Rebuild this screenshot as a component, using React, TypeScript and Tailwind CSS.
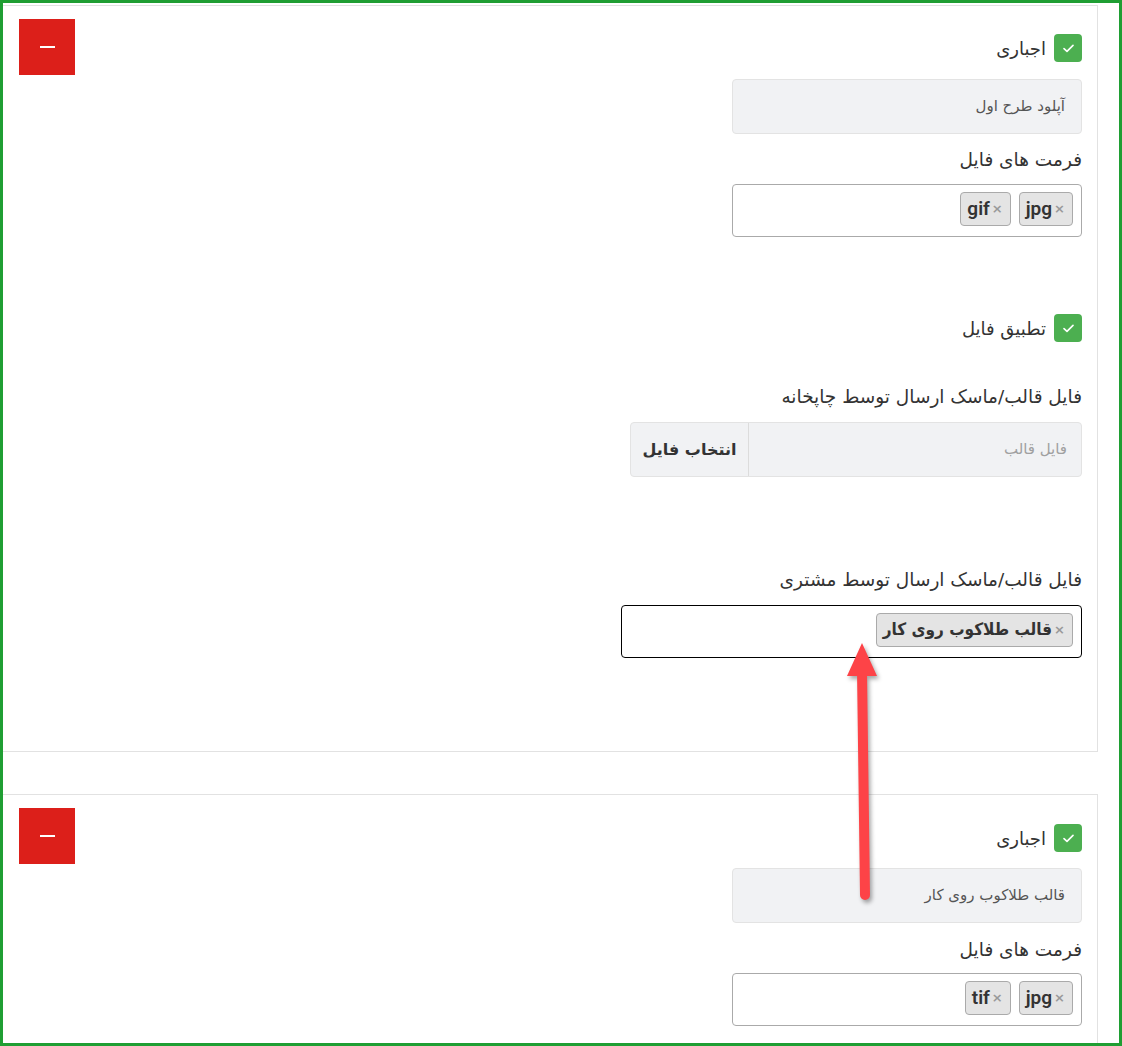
const fa = { fontFamily: '"DejaVu Sans", "Noto Sans", sans-serif' };
const tagFont = { fontFamily: '"DejaVu Sans Condensed", "DejaVu Sans", sans-serif' };
const latinFont = { fontFamily: 'Roboto, "DejaVu Sans", sans-serif' };

function RemoveButton() {
  return (
    <button className="w-14 h-14 bg-[#dc1f1a] flex items-center justify-center shrink-0">
      <span className="block w-[15px] h-[2px] bg-white" />
    </button>
  );
}

function CheckRow({ label }: { label: string }) {
  return (
    <div dir="rtl" className="flex items-center gap-2 h-7">
      <span className="w-7 h-7 rounded-[4px] bg-[#4caf50] flex items-center justify-center">
        <svg width="11" height="9" viewBox="0 0 11 9" fill="none">
          <path d="M1 4.6 L4 7.4 L10 1.4" stroke="white" strokeWidth="1.6" strokeLinecap="round" strokeLinejoin="round" />
        </svg>
      </span>
      <span className="text-[18px] text-[#333]">{label}</span>
    </div>
  );
}

function Label({ text, className = "" }: { text: string; className?: string }) {
  return (
    <div dir="rtl" className={`text-[18.5px] leading-6 text-[#333] ${className}`}>
      {text}
    </div>
  );
}

function Tag({ text, latin }: { text: string; latin?: boolean }) {
  return (
    <span className="h-[34px] flex items-center gap-[2px] pl-[6px] pr-[7px] bg-[#e4e4e4] border border-[#aaa] rounded-[4px]">
      <span className="text-[#999] text-[13px] font-bold">×</span>
      {latin ? (
        <span style={latinFont} className="text-[19px] font-semibold text-[#333]">{text}</span>
      ) : (
        <span style={tagFont} className="text-[17px] font-bold text-[#333]">{text}</span>
      )}
    </span>
  );
}

function TagBox({ tags, width, border, latin }: { tags: string[]; width: string; border: string; latin?: boolean }) {
  return (
    <div dir="rtl" className={`${width} h-[53px] rounded-[4px] border ${border} flex items-start pt-[7px] pr-2 gap-2 bg-white`}>
      {tags.map((t) => (
        <Tag key={t} text={t} latin={latin} />
      ))}
    </div>
  );
}

function DisabledInput({ text }: { text: string }) {
  return (
    <div dir="rtl" className="w-[350px] h-[55px] rounded-[4px] border border-[#e3e3e3] bg-[#f1f2f4] flex items-center pr-4 text-[15px] text-[#555]">
      {text}
    </div>
  );
}

function FileGroup() {
  return (
    <div dir="rtl" className="w-[452px] h-[55px] rounded-[4px] border border-[#e3e3e3] bg-[#f1f2f4] flex">
      <div className="flex-1 flex items-center pr-[14px] text-[15px] text-[#a0a0a0]">فایل قالب</div>
      <div className="w-[118px] border-r border-[#dcdcdc] flex items-center justify-center text-[16px] font-bold text-[#333]">
        انتخاب فایل
      </div>
    </div>
  );
}

export default function App() {
  return (
    <div style={fa} className="relative w-[1122px] h-[1046px] border-[3px] border-[#1f9e33] overflow-hidden bg-white">
      <div className="pt-[2px] w-[1095px]">
        {/* first panel */}
        <div className="flex justify-between border-t border-r border-b border-[#e2e2e2] pl-4 pr-[15px] pt-[13px] pb-[93px]">
          <RemoveButton />
          <div className="flex flex-col items-end pt-[15px]">
            <CheckRow label="اجباری" />
            <div className="mt-[17px]">
              <DisabledInput text="آپلود طرح اول" />
            </div>
            <Label text="فرمت های فایل" className="mt-[14px]" />
            <div className="mt-3">
              <TagBox tags={["jpg", "gif"]} width="w-[350px]" border="border-[#aaa]" latin />
            </div>
            <div className="mt-[77px]">
              <CheckRow label="تطبیق فایل" />
            </div>
            <Label text="فایل قالب/ماسک ارسال توسط چاپخانه" className="mt-[43px]" />
            <div className="mt-[13px]">
              <FileGroup />
            </div>
            <Label text="فایل قالب/ماسک ارسال توسط مشتری" className="mt-[91px]" />
            <div className="mt-[13px]">
              <TagBox tags={["قالب طلاکوب روی کار"]} width="w-[461px]" border="border-black" />
            </div>
          </div>
        </div>

        {/* second panel */}
        <div className="mt-[42px] flex justify-between border-t border-r border-[#e2e2e2] pl-4 pr-[15px] pt-[13px] pb-10">
          <RemoveButton />
          <div className="flex flex-col items-end pt-4">
            <CheckRow label="اجباری" />
            <div className="mt-4">
              <DisabledInput text="قالب طلاکوب روی کار" />
            </div>
            <Label text="فرمت های فایل" className="mt-[15px]" />
            <div className="mt-[11px]">
              <TagBox tags={["jpg", "tif"]} width="w-[350px]" border="border-[#aaa]" latin />
            </div>
          </div>
        </div>
      </div>

      {/* annotation arrow */}
      <svg
        className="absolute left-[-3px] top-[-3px] pointer-events-none drop-shadow-[2px_3px_2px_rgba(0,0,0,0.35)]"
        width="1122"
        height="1046"
      >
        <line x1="865" y1="895" x2="862" y2="670" stroke="#fd4347" strokeWidth="10" strokeLinecap="round" />
        <polygon points="862,643 847,676 877,676" fill="#fd4347" />
      </svg>
    </div>
  );
}
